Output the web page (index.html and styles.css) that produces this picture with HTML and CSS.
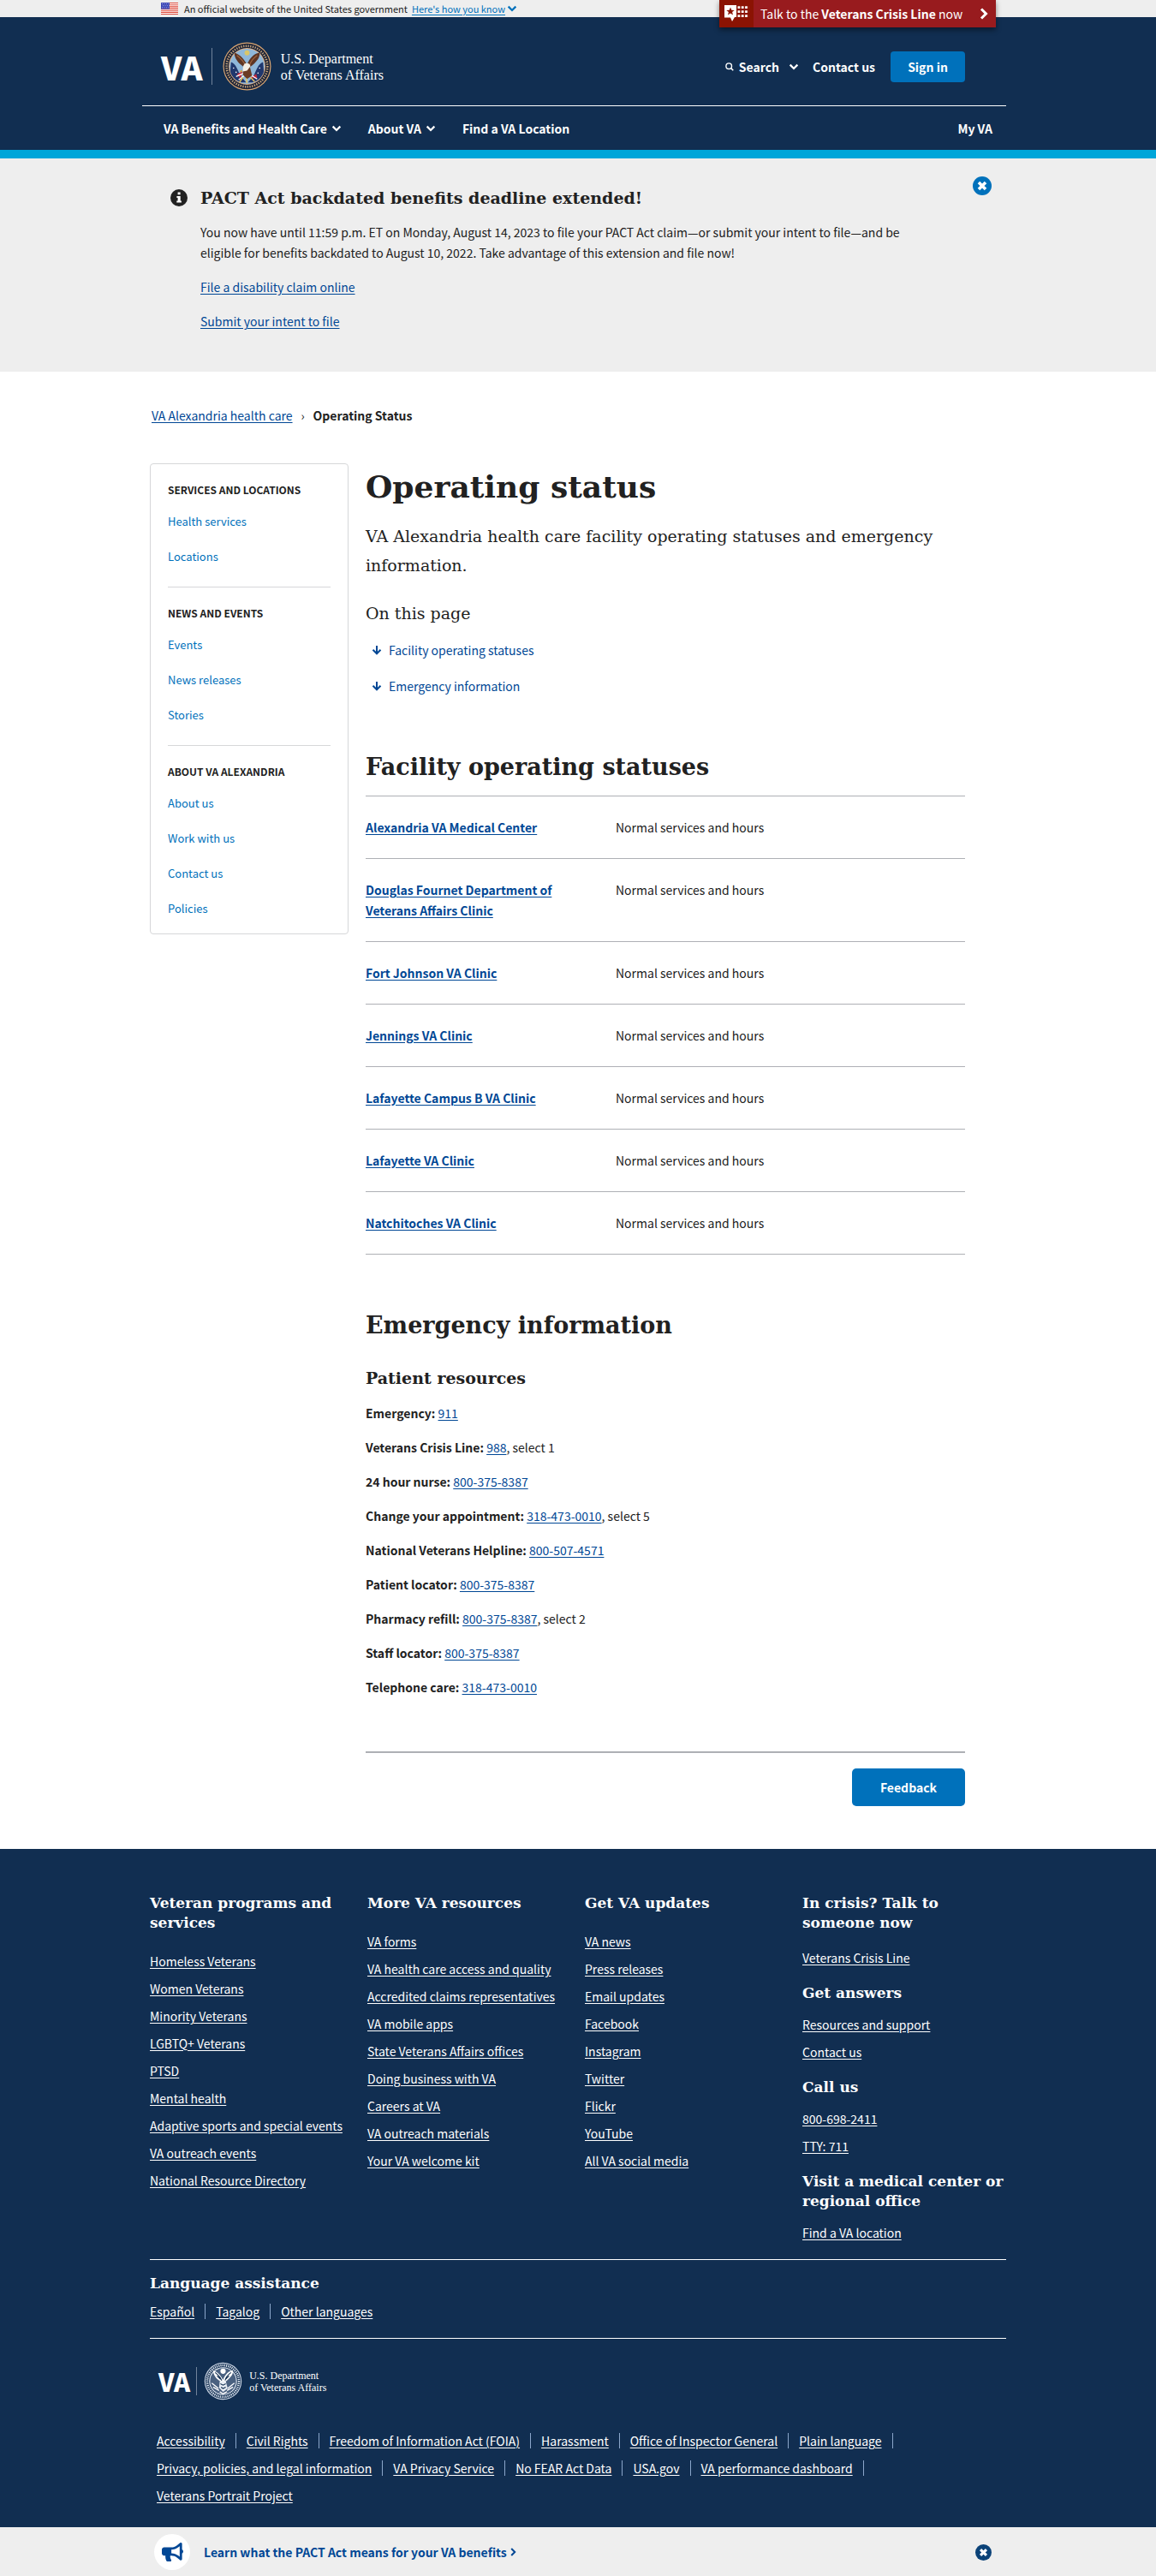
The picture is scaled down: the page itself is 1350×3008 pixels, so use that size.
FILE: index.html
```html
<!DOCTYPE html>
<html lang="en">
<head>
<meta charset="utf-8">
<meta name="viewport" content="width=device-width, initial-scale=1">
<title>Operating status | VA Alexandria health care</title>
<link rel="stylesheet" href="styles.css">
</head>
<body>

<svg class="defs" aria-hidden="true">
  <defs>
    <symbol id="chevron" viewBox="0 0 10 7"><path d="M1.2 1.4 5 5.2l3.800-3.800" fill="none" stroke="currentColor" stroke-width="2"/></symbol>
    <symbol id="close" viewBox="0 0 22 22"><circle cx="11" cy="11" r="11" fill="currentColor"/><path d="M7 7l8 8M15 7l-8 8" fill="none" stroke="#fff" stroke-width="3.600"/></symbol>
    <symbol id="arrow-down" viewBox="0 0 12 12"><path d="M6 1v9M1.500 5.800 6 10.300l4.500-4.500" fill="none" stroke="currentColor" stroke-width="2"/></symbol>
    <symbol id="seal-color" viewBox="0 0 58 58">
      <circle cx="29" cy="29" r="28.500" fill="#d9a673"/>
      <circle cx="29" cy="29" r="27.300" fill="#1c2338"/>
      <circle cx="29" cy="29" r="24.300" fill="none" stroke="#c9a77c" stroke-width="2.600" stroke-dasharray="1.300 1.500"/>
      <circle cx="29" cy="29" r="21.800" fill="#e2b184"/>
      <circle cx="29" cy="29" r="20.800" fill="#8fb7d9"/>
      <path d="M10 24c6 2 8 10 11 16l7 8c-9 1-17-5-19-13z" fill="#20376d"/>
      <path d="M48 24c-6 2-8 10-11 16l-7 8c9 1 17-5 19-13z" fill="#20376d"/>
      <g fill="#fff"><circle cx="13" cy="31" r=".8"/><circle cx="16" cy="36" r=".8"/><circle cx="44" cy="31" r=".8"/><circle cx="42" cy="37" r=".8"/></g>
      <path d="M17 38l7-3-3 9zM33 43l7-5 1 5z" fill="#c3263b"/>
      <path d="M16 41l9-4M19 45l8-6M33 39l8 5" stroke="#fff" stroke-width="1.300"/>
      <circle cx="29" cy="13" r="3" fill="#d9c66a"/>
      <path d="M29 33c-4-4-9-6-12-11-2-3-3-6-3-9 5 1 11 6 15 14 3-8 9-14 15-14 0 4-1 7-4 10-3 4-7 6-11 10z" fill="#5d3524"/>
      <path d="M17 16c4 3 8 7 10 12M41 16c-4 3-8 7-9 12" stroke="#a2643c" stroke-width="1.200" fill="none"/>
      <path d="M25 28h7l3 12-6 4-5-5z" fill="#6b3b24"/>
      <path d="M26 26c3-2 7 0 7 3l-4 5-5 1c0-4 0-7 2-9z" fill="#f4eee3"/>
      <path d="M23 33l-3 2 3 1z" fill="#e8a02e"/>
      <path d="M24 42l-4 6M28 43l1 6M33 42l5 5" stroke="#e6c25b" stroke-width="1.500"/>
    </symbol>
    <symbol id="seal-mono" viewBox="0 0 58 58">
      <circle cx="29" cy="29" r="28" fill="#c9d3e2"/>
      <circle cx="29" cy="29" r="26.500" fill="#112e51"/>
      <circle cx="29" cy="29" r="23.800" fill="none" stroke="#dfe6f0" stroke-width="3.400" stroke-dasharray="1.600 1.300"/>
      <circle cx="29" cy="29" r="21" fill="#dfe6f0"/>
      <circle cx="29" cy="29" r="19.500" fill="#4a6180"/>
      <circle cx="29" cy="14" r="4" fill="#fff"/>
      <path d="M29 33c-4-4-9-6-12-11-2-3-3-6-3-9 5 1 11 6 15 14 3-8 9-14 15-14 0 4-1 7-4 10-3 4-7 6-11 10z" fill="#fff"/>
      <path d="M17 16c4 3 8 7 10 12M41 16c-4 3-8 7-9 12M20 21l5 5M38 21l-5 5" stroke="#112e51" stroke-width="1.400" fill="none"/>
      <path d="M24 29h9l3 11-7 5-6-6z" fill="#e8edf4"/>
      <path d="M25 33l4 2 4-2M26 38l3 2 4-2" stroke="#112e51" fill="none" stroke-width="1.400"/>
      <path d="M12 32l10 8M14 38l9 5M46 32l-10 8M44 38l-9 5M24 45l5 3 6-3" stroke="#fff" stroke-width="1.800" fill="none"/>
    </symbol>
  </defs>
</svg>

<div class="gov-banner">
  <div class="wrap gov-banner-inner">
    <svg class="flag" viewBox="0 0 20 14" aria-hidden="true">
      <path fill="#fff" d="M0 0h20v14H0z"/>
      <path stroke="#dd4a3c" stroke-width="1.100" d="M0 .5h20M0 2.700h20M0 4.900h20M0 7.100h20M0 9.300h20M0 11.400h20M0 13.500h20"/>
      <path fill="#3a45b5" d="M0 0h10v7.600H0z"/>
      <path stroke="#cfd4f5" stroke-width=".8" stroke-dasharray="1 1.400" d="M1 1.500h8M2 3.700h8M1 5.900h8"/>
    </svg>
    <span>An official website of the United States government</span>
    <button class="gov-toggle" type="button"><span>Here's how you know</span><svg class="chev" aria-hidden="true"><use href="#chevron"/></svg></button>
    <button class="crisis" type="button">
      <span class="crisis-icon">
        <svg viewBox="0 0 29 20" aria-hidden="true">
          <path fill="#fff" d="M0 0h14v14h-2l-3 5-2-4.500L0 14.500z"/>
          <path fill="#8b1303" d="M7 2.500l1.300 3.200 3.400.2-2.600 2.200.9 3.400-3-1.900-3 1.900.9-3.400-2.600-2.200 3.400-.2z"/>
          <path stroke="#fff" stroke-width="2.800" stroke-dasharray="2.800 1.500" d="M15.500 2.600h13M15.500 7.600h13M15.500 12.600h13"/>
        </svg>
      </span>
      <span class="crisis-text">Talk to the <strong>Veterans Crisis Line</strong> now</span>
      <svg class="crisis-arrow" viewBox="0 0 10 14" aria-hidden="true"><path d="M2 1.500 7.500 7 2 12.500" fill="none" stroke="#fff" stroke-width="3"/></svg>
    </button>
  </div>
</div>

<header class="header">
  <div class="wrap header-inner">
    <div class="header-top">
      <a class="logo" href="#" aria-label="VA, U.S. Department of Veterans Affairs">
        <span class="logo-va">VA</span>
        <svg class="logo-seal" aria-hidden="true"><use href="#seal-color"/></svg>
        <span class="logo-name">U.S. Department<br>of Veterans Affairs</span>
      </a>
      <div class="tools">
        <button class="tool search" type="button">
          <svg class="glass" viewBox="0 0 10 10" aria-hidden="true"><circle cx="4.200" cy="4.200" r="3.300" fill="none" stroke="#fff" stroke-width="1.400"/><path d="M6.600 6.600 9.300 9.300" stroke="#fff" stroke-width="1.500"/></svg>
          <span>Search</span>
          <svg class="chev" aria-hidden="true"><use href="#chevron"/></svg>
        </button>
        <a class="tool" href="#">Contact us</a>
        <button class="sign-in" type="button">Sign in</button>
      </div>
    </div>
    <nav class="nav" aria-label="Main">
      <button class="nav-item" type="button">VA Benefits and Health Care <svg class="chev" aria-hidden="true"><use href="#chevron"/></svg></button>
      <button class="nav-item" type="button">About VA <svg class="chev" aria-hidden="true"><use href="#chevron"/></svg></button>
      <a class="nav-item" href="#">Find a VA Location</a>
      <a class="nav-item nav-my" href="#">My VA</a>
    </nav>
  </div>
</header>

<section class="notice">
  <div class="wrap notice-inner">
    <svg class="info" viewBox="0 0 20 20" aria-hidden="true"><circle cx="10" cy="10" r="10" fill="#212121"/><path d="M8.600 3.600h3v2.600h-3zM7.400 8h4.300v5.600h1.200v2H7.300v-2h1.300V10H7.400z" fill="#fff"/></svg>
    <div class="notice-body">
      <h2 class="notice-title">PACT Act backdated benefits deadline extended!</h2>
      <p>You now have until 11:59 p.m. ET on Monday, August 14, 2023 to file your PACT Act claim—or submit your intent to file—and be eligible for benefits backdated to August 10, 2022. Take advantage of this extension and file now!</p>
      <p><a class="link" href="#">File a disability claim online</a></p>
      <p><a class="link" href="#">Submit your intent to file</a></p>
    </div>
    <button class="close" type="button" aria-label="Close notice"><svg aria-hidden="true"><use href="#close"/></svg></button>
  </div>
</section>

<nav class="wrap breadcrumb" aria-label="Breadcrumb">
  <a class="link" href="#">VA Alexandria health care</a>
  <span class="crumb-sep">›</span>
  <strong>Operating Status</strong>
</nav>

<div class="wrap page">
  <nav class="sidebar" aria-label="Section">
    <section>
      <h2>SERVICES AND LOCATIONS</h2>
      <ul><li><a href="#">Health services</a></li><li><a href="#">Locations</a></li></ul>
    </section>
    <section>
      <h2>NEWS AND EVENTS</h2>
      <ul><li><a href="#">Events</a></li><li><a href="#">News releases</a></li><li><a href="#">Stories</a></li></ul>
    </section>
    <section>
      <h2>ABOUT VA ALEXANDRIA</h2>
      <ul><li><a href="#">About us</a></li><li><a href="#">Work with us</a></li><li><a href="#">Contact us</a></li><li><a href="#">Policies</a></li></ul>
    </section>
  </nav>

  <main class="content">
    <h1>Operating status</h1>
    <p class="intro">VA Alexandria health care facility operating statuses and emergency information.</p>
    <p class="toc-title">On this page</p>
    <ul class="toc">
      <li><a href="#statuses"><svg aria-hidden="true"><use href="#arrow-down"/></svg>Facility operating statuses</a></li>
      <li><a href="#emergency"><svg aria-hidden="true"><use href="#arrow-down"/></svg>Emergency information</a></li>
    </ul>

    <h2 id="statuses">Facility operating statuses</h2>
    <table class="statuses">
      <tbody>
        <tr><th scope="row"><a class="link" href="#">Alexandria VA Medical Center</a></th><td>Normal services and hours</td></tr>
        <tr><th scope="row"><a class="link" href="#">Douglas Fournet Department of Veterans Affairs Clinic</a></th><td>Normal services and hours</td></tr>
        <tr><th scope="row"><a class="link" href="#">Fort Johnson VA Clinic</a></th><td>Normal services and hours</td></tr>
        <tr><th scope="row"><a class="link" href="#">Jennings VA Clinic</a></th><td>Normal services and hours</td></tr>
        <tr><th scope="row"><a class="link" href="#">Lafayette Campus B VA Clinic</a></th><td>Normal services and hours</td></tr>
        <tr><th scope="row"><a class="link" href="#">Lafayette VA Clinic</a></th><td>Normal services and hours</td></tr>
        <tr><th scope="row"><a class="link" href="#">Natchitoches VA Clinic</a></th><td>Normal services and hours</td></tr>
      </tbody>
    </table>

    <h2 class="emergency" id="emergency">Emergency information</h2>
    <h3>Patient resources</h3>
    <div class="phones">
      <p><strong>Emergency:</strong> <a class="link" href="#">911</a></p>
      <p><strong>Veterans Crisis Line:</strong> <a class="link" href="#">988</a>, select 1</p>
      <p><strong>24 hour nurse:</strong> <a class="link" href="#">800-375-8387</a></p>
      <p><strong>Change your appointment:</strong> <a class="link" href="#">318-473-0010</a>, select 5</p>
      <p><strong>National Veterans Helpline:</strong> <a class="link" href="#">800-507-4571</a></p>
      <p><strong>Patient locator:</strong> <a class="link" href="#">800-375-8387</a></p>
      <p><strong>Pharmacy refill:</strong> <a class="link" href="#">800-375-8387</a>, select 2</p>
      <p><strong>Staff locator:</strong> <a class="link" href="#">800-375-8387</a></p>
      <p><strong>Telephone care:</strong> <a class="link" href="#">318-473-0010</a></p>
    </div>
    <div class="feedback"><button type="button">Feedback</button></div>
  </main>
</div>

<footer class="footer">
  <div class="wrap">
    <div class="footer-cols">
      <section>
        <h2>Veteran programs and services</h2>
        <ul>
          <li><a href="#">Homeless Veterans</a></li><li><a href="#">Women Veterans</a></li><li><a href="#">Minority Veterans</a></li><li><a href="#">LGBTQ+ Veterans</a></li><li><a href="#">PTSD</a></li><li><a href="#">Mental health</a></li><li><a href="#">Adaptive sports and special events</a></li><li><a href="#">VA outreach events</a></li><li><a href="#">National Resource Directory</a></li>
        </ul>
      </section>
      <section>
        <h2>More VA resources</h2>
        <ul>
          <li><a href="#">VA forms</a></li><li><a href="#">VA health care access and quality</a></li><li><a href="#">Accredited claims representatives</a></li><li><a href="#">VA mobile apps</a></li><li><a href="#">State Veterans Affairs offices</a></li><li><a href="#">Doing business with VA</a></li><li><a href="#">Careers at VA</a></li><li><a href="#">VA outreach materials</a></li><li><a href="#">Your VA welcome kit</a></li>
        </ul>
      </section>
      <section>
        <h2>Get VA updates</h2>
        <ul>
          <li><a href="#">VA news</a></li><li><a href="#">Press releases</a></li><li><a href="#">Email updates</a></li><li><a href="#">Facebook</a></li><li><a href="#">Instagram</a></li><li><a href="#">Twitter</a></li><li><a href="#">Flickr</a></li><li><a href="#">YouTube</a></li><li><a href="#">All VA social media</a></li>
        </ul>
      </section>
      <section class="contact">
        <h2>In crisis? Talk to someone now</h2>
        <ul><li><a href="#">Veterans Crisis Line</a></li></ul>
        <h2>Get answers</h2>
        <ul><li><a href="#">Resources and support</a></li><li><a href="#">Contact us</a></li></ul>
        <h2>Call us</h2>
        <ul><li><a href="#">800-698-2411</a></li><li><a href="#">TTY: 711</a></li></ul>
        <h2>Visit a medical center or regional office</h2>
        <ul><li><a href="#">Find a VA location</a></li></ul>
      </section>
    </div>

    <section class="languages">
      <h2>Language assistance</h2>
      <ul class="piped"><li><a href="#">Español</a></li><li><a href="#">Tagalog</a></li><li><a href="#">Other languages</a></li></ul>
    </section>

    <div class="footer-end">
      <a class="logo logo-small" href="#" aria-label="VA, U.S. Department of Veterans Affairs">
        <span class="logo-va">VA</span>
        <svg class="logo-seal" aria-hidden="true"><use href="#seal-mono"/></svg>
        <span class="logo-name">U.S. Department<br>of Veterans Affairs</span>
      </a>
      <ul class="piped">
        <li><a href="#">Accessibility</a></li><li><a href="#">Civil Rights</a></li><li><a href="#">Freedom of Information Act (FOIA)</a></li><li><a href="#">Harassment</a></li><li><a href="#">Office of Inspector General</a></li><li><a href="#">Plain language</a></li><li><a href="#">Privacy, policies, and legal information</a></li><li><a href="#">VA Privacy Service</a></li><li><a href="#">No FEAR Act Data</a></li><li><a href="#">USA.gov</a></li><li><a href="#">VA performance dashboard</a></li><li><a href="#">Veterans Portrait Project</a></li>
      </ul>
    </div>
  </div>
</footer>

<aside class="promo">
  <div class="wrap promo-inner">
    <span class="promo-icon">
      <svg viewBox="0 0 576 512" aria-hidden="true"><path fill="currentColor" d="M576 240c0-23.630-12.950-44.040-32-55.120V32c0-8.750-6.900-32-32-32-7.120 0-14.190 2.380-19.980 7.020l-85.030 68.030C364.280 109.190 310.660 128 256 128H64c-35.350 0-64 28.650-64 64v96c0 35.350 28.650 64 64 64h33.700c-1.390 10.480-2.180 21.140-2.180 32 0 39.770 9.260 77.350 25.560 110.940 5.190 10.690 16.520 17.060 28.400 17.060h74.280c26.050 0 41.690-29.840 25.900-50.560-16.400-21.520-26.150-48.360-26.150-77.440 0-11.110 1.620-21.790 4.410-32H256c54.660 0 108.280 18.810 150.980 52.950l85.030 68.030a32 32 0 0 0 19.980 7.020c24.920 0 32-22.780 32-32V295.130C563.050 284.040 576 263.630 576 240zm-96 141.420-33.050-26.440C392.950 311.780 325.120 288 256 288v-96c69.120 0 136.950-23.780 190.950-66.980L480 98.580z"/></svg>
    </span>
    <a class="promo-link" href="#">Learn what the PACT Act means for your VA benefits <svg viewBox="0 0 7 10" aria-hidden="true"><path d="M1.200 1 5.200 5l-4 4" fill="none" stroke="currentColor" stroke-width="2"/></svg></a>
    <button class="close close-small" type="button" aria-label="Dismiss"><svg aria-hidden="true"><use href="#close"/></svg></button>
  </div>
</aside>
</body>
</html>
```
FILE: styles.css
```css
:root {
  --sans: "Noto Sans CJK SC", "Open Sans", sans-serif;
  --slab: "DejaVu Serif", serif;
  --navy: #112e51;
  --blue: #0071bb;
  --link: #004795;
  --ink: #212121;
  --grey: #eeeeee;
}

* { box-sizing: border-box; }

body {
  margin: 0;
  color: var(--ink);
  background: #fff;
  font: 14px/24px var(--sans);
}

h1, h2, h3, p, ul { margin: 0; padding: 0; }
ul { list-style: none; }
button { border: 0; padding: 0; background: none; color: inherit; font: inherit; cursor: pointer; }
a { color: inherit; text-decoration: none; }
svg { display: block; flex: none; }

.defs { position: absolute; width: 0; height: 0; }
.wrap { max-width: 1000px; margin: 0 auto; }
.link { color: var(--link); text-decoration: underline; text-underline-offset: 2px; }
.chev { width: 12px; height: 8px; }

/* Government banner and crisis line */
.gov-banner { background: var(--grey); }
.gov-banner-inner {
  position: relative;
  display: flex;
  align-items: center;
  height: 20px;
  padding-left: 13px;
  font-size: 11px;
  line-height: 20px;
}
.flag { width: 20px; height: 14px; margin-right: 7px; }
.gov-toggle { display: flex; align-items: center; gap: 2px; margin-left: 5px; color: var(--blue); }
.gov-toggle span { text-decoration: underline; text-underline-offset: 2px; }
.crisis {
  position: absolute;
  top: 0;
  right: 12px;
  z-index: 1;
  display: flex;
  align-items: center;
  width: 323px;
  height: 32px;
  background: #981b1e;
  color: #fff;
  font-size: 14px;
  box-shadow: 0 3px 6px rgba(0, 0, 0, .45);
}
.crisis-icon { display: grid; place-items: center; width: 40px; height: 32px; background: #8b1303; }
.crisis-icon svg { width: 29px; height: 20px; }
.crisis-text { flex: 1; padding-left: 8px; text-align: left; }
.crisis-arrow { width: 10px; height: 14px; margin-right: 9px; }

/* Header */
.header { background: var(--navy); color: #fff; border-bottom: 10px solid #00a6d9; }
.header-inner { font-weight: 700; }
.header-top {
  display: flex;
  align-items: center;
  justify-content: space-between;
  margin-left: -9px;
  padding: 29px 48px 17px 22px;
  border-bottom: 1px solid #fff;
}
.logo { display: inline-flex; align-items: center; font-weight: 400; }
.logo-va {
  padding-right: 10px;
  border-right: 1px solid #71839b;
  font-weight: 900;
  font-size: 38px;
  line-height: 43px;
}
.logo-seal { width: 57px; height: 57px; margin: 0 11px 0 12px; }
.logo-name { font: 16px/19px "Liberation Serif", serif; }
.tools { display: flex; align-items: center; gap: 16px; }
.search { display: flex; align-items: center; }
.search span { margin: 0 11px 0 6px; }
.glass { width: 10px; height: 10px; }
.sign-in { width: 87px; height: 36px; margin-left: 2px; border-radius: 4px; background: var(--blue); font-weight: 700; }
.tool { font-weight: 700; }
.nav { display: flex; gap: 31px; padding: 14px 16px 13px; }
.nav-item { display: flex; align-items: center; gap: 5px; font-weight: 700; }
.nav-my { margin-left: auto; }

/* Notice */
.notice { background: var(--grey); padding: 21px 0 47px; }
.notice-inner { display: flex; align-items: flex-start; padding: 0 17px 0 24px; }
.info { width: 20px; height: 20px; margin-top: 15px; }
.notice-body { flex: 1; padding: 12px 40px 0 15px; }
.notice-body p { margin-top: 16px; }
.notice-title { font: 700 19px/26px var(--slab); }
.notice-body .notice-title + p { margin-top: 15px; }
.close { color: var(--blue); }
.close svg { width: 22px; height: 22px; }

/* Breadcrumb */
.breadcrumb { display: flex; padding: 39px 0 44px 2px; }
.crumb-sep { width: 24px; text-align: center; }

/* Page columns */
.page { display: grid; grid-template-columns: 232px minmax(0, 700px); column-gap: 20px; align-items: start; }
.sidebar { border: 1px solid #d6d7d9; border-radius: 4px; padding: 0 20px; font-size: 13px; }
.sidebar section { padding: 20px 0 15px; }
.sidebar section + section { border-top: 1px solid #d6d7d9; }
.sidebar section:last-child { padding-bottom: 9px; }
.sidebar h2 { margin-bottom: 6px; font-size: 12px; line-height: 20px; }
.sidebar li { line-height: 41px; }
.sidebar a { color: var(--blue); }

.content { padding: 5px 0 50px; }
.content h1, .content h2, .content h3 { font-family: var(--slab); }
.content h1 { font-size: 36px; line-height: 44px; }
.content h2 { margin: 65px 0 15px; font-size: 27px; line-height: 36px; }
.content h3 { font-size: 19px; line-height: 26px; }
.content .emergency { margin-bottom: 30px; }
.intro { margin-top: 19px; font: 19px/34px var(--slab); }
.toc-title { margin-top: 24px; font: 19px/30px var(--slab); }
.toc { padding: 16px 0 0 7px; }
.toc li + li { margin-top: 18px; }
.toc a { display: flex; align-items: center; gap: 8px; color: var(--link); }
.toc svg { width: 12px; height: 12px; }

.statuses { width: 100%; border-collapse: collapse; border-top: 1px solid #aeb0b5; text-align: left; }
.statuses tr { border-bottom: 1px solid #aeb0b5; }
.statuses th, .statuses td { padding: 24px 0; vertical-align: top; }
.statuses th { width: 292px; padding-right: 40px; }

.phones p { margin-top: 16px; }
.feedback { margin-top: 63px; padding-top: 18px; border-top: 2px solid #aeb0b5; text-align: right; }
.feedback button { width: 132px; height: 44px; border-radius: 5px; background: var(--blue); color: #fff; font-weight: 700; }

/* Footer */
.footer { background: var(--navy); color: #fff; }
.footer h2 { font: 700 17px/23px var(--slab); }
.footer li a { text-decoration: underline; text-underline-offset: 2px; }
.footer-cols { display: grid; grid-template-columns: repeat(4, minmax(0, 1fr)); gap: 16px; padding: 52px 0 19px; }
.footer-cols ul { display: grid; gap: 8px; margin-top: 21px; }
.contact h2 + ul { margin-top: 13px; }
.contact h2:first-child + ul { margin-top: 17px; }
.contact ul + h2 { margin-top: 18px; }
.languages { padding: 16px 0 19px; border: solid #fff; border-width: 1px 0; }
.piped { display: flex; flex-wrap: wrap; row-gap: 8px; }
.piped li { display: flex; align-items: center; }
.piped li:not(:last-child)::after { content: ""; width: 1px; height: 18px; margin: 0 12px; background: #8ba6ca; }
.languages .piped { margin-top: 9px; }
.footer-end { padding: 27px 8px 25px; }
.footer-end .piped { margin-top: 35px; }
.logo-small { margin-left: 2px; }
.logo-small .logo-va { padding-right: 7px; font-size: 29px; line-height: 33px; }
.logo-small .logo-seal { width: 45px; height: 45px; margin: 0 8px; }
.logo-small .logo-name { font-size: 12px; line-height: 14px; }

/* Promo bar */
.promo { position: sticky; bottom: 0; background: var(--grey); }
.promo-inner { display: flex; align-items: center; height: 58px; padding: 0 17px 0 5px; color: var(--link); }
.promo-icon { display: grid; place-items: center; width: 42px; height: 42px; border-radius: 50%; background: #fff; }
.promo-icon svg { width: 25px; height: 24px; }
.promo-link { display: flex; align-items: center; gap: 4px; margin: 0 auto 0 16px; font-weight: 700; }
.promo-link svg { width: 7px; height: 10px; }
.close-small { color: #0b4278; }
.close-small svg { width: 19px; height: 19px; }
```
